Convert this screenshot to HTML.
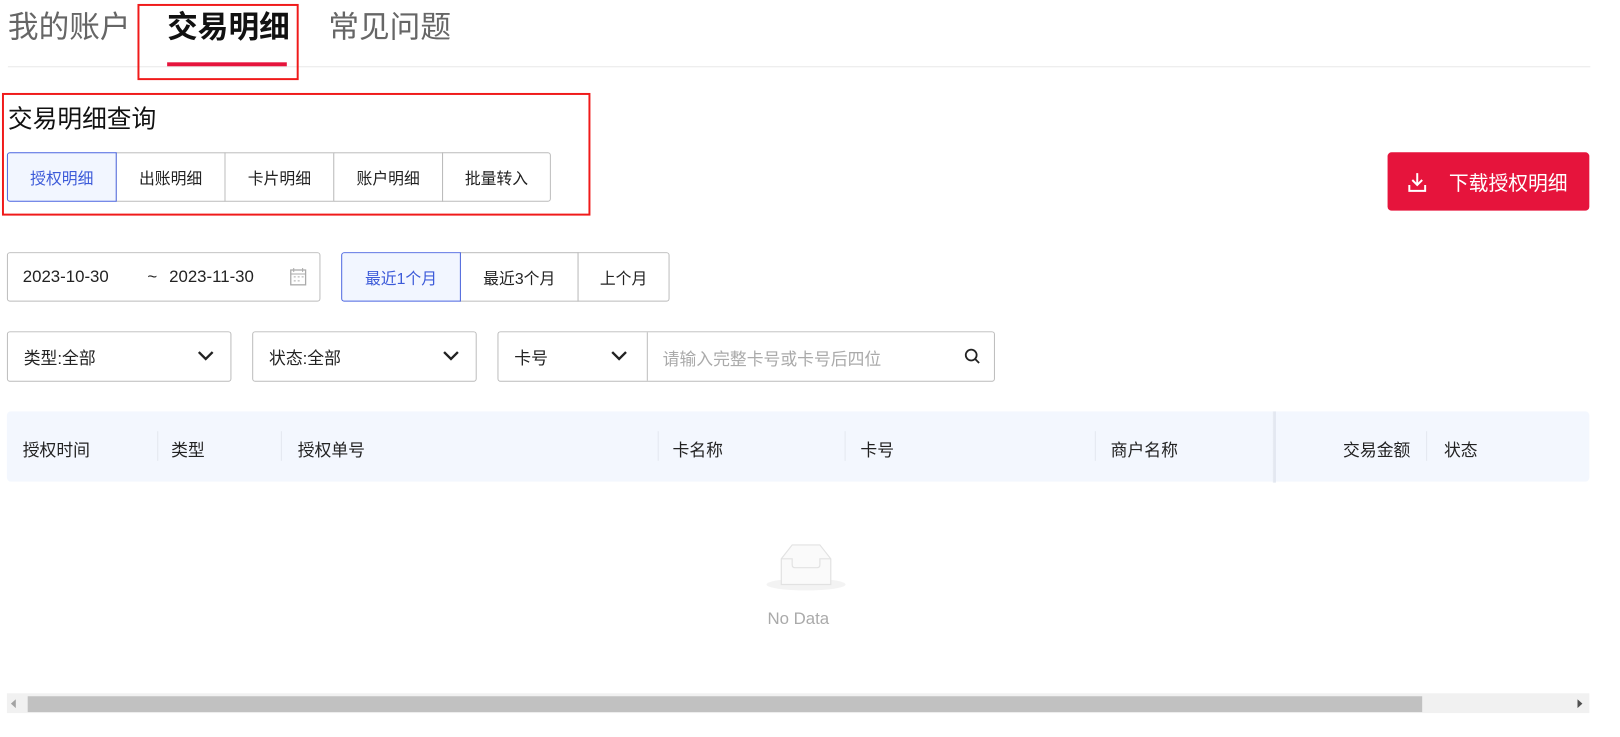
<!DOCTYPE html>
<html><head><meta charset="utf-8"><style>
*{box-sizing:border-box;margin:0;padding:0}
body{width:1620px;height:735px;background:#fff;position:relative;overflow:hidden;font-family:"Liberation Sans","Noto Sans CJK SC",sans-serif;color:#222}
#w{position:absolute;left:0;top:0;width:1640px;height:745px;transform:scale(0.989);transform-origin:0 0}
.a{position:absolute}
.tab{position:absolute;top:8px;font-size:31px;color:#666;line-height:40px}
.btn{position:absolute;border:1px solid #bbb;background:#fff;font-size:16px;display:flex;align-items:center;justify-content:center;color:#222}
.act{background:#f2f6ff;border-color:#4a64e0;color:#3d5bd9;z-index:2}
.sel{position:absolute;border:1px solid #bbb;border-radius:3px;font-size:17px;display:flex;align-items:center;padding-left:16px}
.chev{position:absolute;right:16px;top:18px}
.th{position:absolute;top:441px;font-size:17px;color:#222}
.sep{position:absolute;top:436px;width:1px;height:30px;background:#e3e7ef}
</style></head><body><div id="w">
<div class="tab" style="left:8px">我的账户</div>
<div class="tab" style="left:169px;color:#111;font-weight:bold">交易明细</div>
<div class="tab" style="left:332px">常见问题</div>
<div class="a" style="left:8px;top:67px;width:1600px;height:1px;background:#e8e8e8"></div>
<div class="a" style="left:169px;top:63px;width:121px;height:4px;background:#e6143c"></div>
<div class="a" style="left:139px;top:4px;width:163px;height:77px;border:2px solid #f01a1a"></div>

<div class="a" style="left:8px;top:101px;font-size:25px;color:#111">交易明细查询</div>
<div class="btn act" style="left:7px;top:154px;width:111px;height:50px;border-radius:3px 0 0 3px">授权明细</div>
<div class="btn" style="left:117px;top:154px;width:111px;height:50px">出账明细</div>
<div class="btn" style="left:227px;top:154px;width:111px;height:50px">卡片明细</div>
<div class="btn" style="left:337px;top:154px;width:111px;height:50px">账户明细</div>
<div class="btn" style="left:447px;top:154px;width:110px;height:50px;border-radius:0 3px 3px 0">批量转入</div>
<div class="a" style="left:2px;top:94px;width:595px;height:124px;border:2px solid #f01a1a"></div>

<div class="a" style="left:1403px;top:154px;width:204px;height:59px;background:#e6143c;border-radius:4px;color:#fff;font-size:20px;display:flex;align-items:center;padding-left:20px">
<svg width="20" height="22" viewBox="0 0 20 22" style="margin-right:22px"><path d="M10 2v12M5 9l5 5 5-5M2 14v6h16v-6" stroke="#fff" stroke-width="2" fill="none"/></svg>下载授权明细</div>

<div class="a" style="left:7px;top:255px;width:317px;height:50px;border:1px solid #bbb;border-radius:3px;font-size:17px">
<span class="a" style="left:15px;top:14px">2023-10-30</span><span class="a" style="left:141px;top:14px">~</span><span class="a" style="left:163px;top:14px">2023-11-30</span>
<svg class="a" style="left:285px;top:15px" width="17" height="18" viewBox="0 0 17 18"><rect x="1" y="2" width="15" height="15" fill="none" stroke="#aaa" stroke-width="1.3"/><path d="M1 6h15M4 0v4M13 0v4M4 9h2M8 9h2M12 9h2M4 13h2M8 13h2" stroke="#aaa"/></svg></div>
<div class="btn act" style="left:345px;top:255px;width:121px;height:50px;border-radius:3px 0 0 3px">最近1个月</div>
<div class="btn" style="left:465px;top:255px;width:120px;height:50px">最近3个月</div>
<div class="btn" style="left:584px;top:255px;width:93px;height:50px;border-radius:0 3px 3px 0">上个月</div>

<div class="sel" style="left:7px;top:335px;width:227px;height:51px">类型:全部<svg class="chev" width="18" height="12"><path d="M2 2l7 7 7-7" stroke="#222" stroke-width="2.4" fill="none"/></svg></div>
<div class="sel" style="left:255px;top:335px;width:227px;height:51px">状态:全部<svg class="chev" width="18" height="12"><path d="M2 2l7 7 7-7" stroke="#222" stroke-width="2.4" fill="none"/></svg></div>
<div class="sel" style="left:503px;top:335px;width:503px;height:51px">卡号<svg class="chev" style="right:370px" width="18" height="12"><path d="M2 2l7 7 7-7" stroke="#222" stroke-width="2.4" fill="none"/></svg>
<div class="a" style="left:150px;top:0;width:1px;height:49px;background:#bbb"></div>
<span class="a" style="left:166px;top:13px;color:#aaa">请输入完整卡号或卡号后四位</span>
<svg class="a" style="left:471px;top:16px" width="17" height="18"><circle cx="7" cy="7" r="5.5" stroke="#222" stroke-width="1.8" fill="none"/><path d="M11 11l4 4" stroke="#222" stroke-width="1.8"/></svg></div>

<div class="a" style="left:7px;top:416px;width:1600px;height:71px;background:#f3f7fe;border-radius:4px"></div>
<div class="a" style="left:1287px;top:416px;width:3px;height:72px;background:linear-gradient(90deg,#e8ecf3,#dfe4ee)"></div>
<div class="th" style="left:23px">授权时间</div><div class="sep" style="left:159px"></div>
<div class="th" style="left:173px">类型</div><div class="sep" style="left:284px"></div>
<div class="th" style="left:301px">授权单号</div><div class="sep" style="left:665px"></div>
<div class="th" style="left:680px">卡名称</div><div class="sep" style="left:854px"></div>
<div class="th" style="left:870px">卡号</div><div class="sep" style="left:1107px"></div>
<div class="th" style="left:1123px">商户名称</div>
<div class="th" style="left:1358px">交易金额</div><div class="sep" style="left:1442px"></div>
<div class="th" style="left:1460px">状态</div>

<svg class="a" style="left:768px;top:546px" width="90" height="60" viewBox="0 0 90 60"><ellipse cx="47" cy="45" rx="40" ry="6" fill="#f3f3f3"/><path d="M22 19L33 5h28l11 14v26H22z" fill="#fafafa" stroke="#e2e2e2" stroke-width="1.2"/><path d="M22 19h11v6c0 2 1 3 3 3h22c2 0 3-1 3-3v-6h11" fill="none" stroke="#e2e2e2" stroke-width="1.2"/></svg>
<div class="a" style="left:776px;top:616px;font-size:17px;color:#aaa">No Data</div>

<div class="a" style="left:7px;top:701px;width:1600px;height:20px;background:#f1f1f1"></div>
<div class="a" style="left:28px;top:704px;width:1410px;height:16px;background:#c1c1c1"></div>
<svg class="a" style="left:11px;top:707px" width="6" height="9"><path d="M5 0v9L0 4.5z" fill="#a3a3a3"/></svg>
<svg class="a" style="left:1595px;top:707px" width="6" height="9"><path d="M0 0v9l5-4.5z" fill="#505050"/></svg>
</div></body></html>
